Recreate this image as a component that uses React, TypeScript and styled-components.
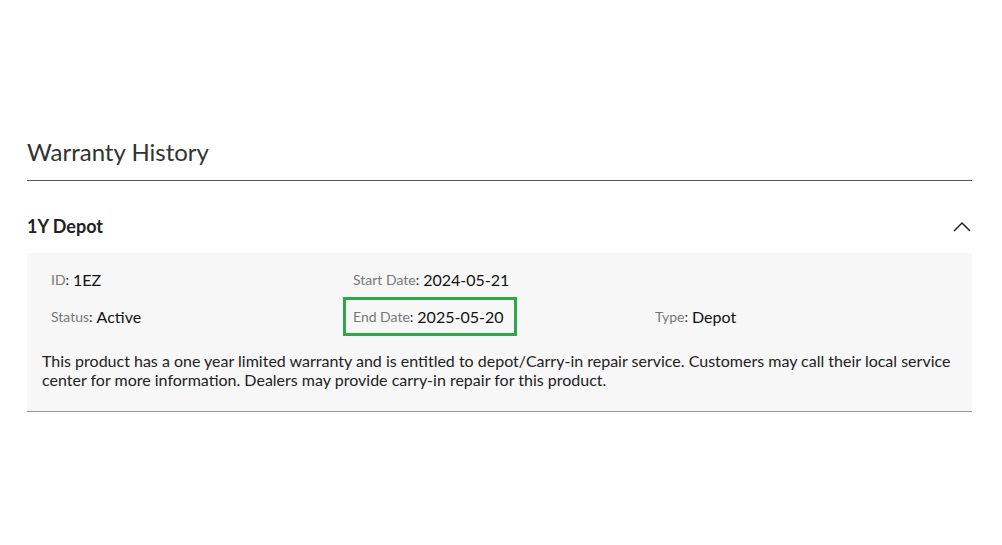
import React from "react";
import styled, {createGlobalStyle} from "styled-components";

const GlobalStyle = createGlobalStyle`
  body {
    margin: 0;
    background: #ffffff;
    font-family: Lato, "Open Sans", sans-serif;
    color: #222;
  }
`

type FieldPropsType = {
  label: string
  value: string
  highlighted?: boolean
};

const Field = (props: FieldPropsType) => {
  return (
    <FieldCell $highlighted={props.highlighted}>
      <FieldLabel>{props.label}</FieldLabel>
      <FieldColon>:</FieldColon>
      <FieldValue>{props.value}</FieldValue>
    </FieldCell>
  );
};

const ChevronUp = () => (
  <svg width="18" height="11" viewBox="0 0 18 11" fill="none">
    <polyline points="1,10 9,2 17,10" stroke="#222" strokeWidth="1.5" />
  </svg>
);

export default function App() {
  return (
    <>
      <GlobalStyle/>
      <Page>
        <Title>Warranty History</Title>
        <AccordionHeader>
          <AccordionTitle>1Y Depot</AccordionTitle>
          <ChevronUp/>
        </AccordionHeader>
        <AccordionBody>
          <FieldsGrid>
            <Field label="ID" value="1EZ"/>
            <Field label="Start Date" value="2024-05-21"/>
            <span/>
            <Field label="Status" value="Active"/>
            <Field label="End Date" value="2025-05-20" highlighted/>
            <Field label="Type" value="Depot"/>
          </FieldsGrid>
          <Description>
            This product has a one year limited warranty and is entitled to depot/Carry-in repair service. Customers may call their local service center for more information. Dealers may provide carry-in repair for this product.
          </Description>
        </AccordionBody>
      </Page>
    </>
  );
}

const Page = styled.div`
  padding: 136px 30px 0 27px;
`
const Title = styled.h2`
  margin: 0;
  padding-bottom: 13px;
  font-size: 24px;
  font-weight: 400;
  line-height: 31px;
  color: #333;
  border-bottom: 1px solid #555;
`
const AccordionHeader = styled.div`
  margin-top: 18px;
  height: 54px;
  display: flex;
  align-items: center;
  justify-content: space-between;
  padding-right: 1px;
`
const AccordionTitle = styled.span`
  font-size: 18px;
  font-weight: 700;
  color: #222;
`
const AccordionBody = styled.div`
  background: #f7f7f7;
  padding: 8px 15px 22px 15px;
  border-bottom: 1px solid #999;
`
const FieldsGrid = styled.div`
  display: grid;
  grid-template-columns: 302px 302px 1fr;
  grid-auto-rows: 37px;
  padding-left: 9px;
`
const FieldCell = styled.div<{ $highlighted?: boolean }>`
  display: flex;
  align-items: center;
  align-self: center;
  justify-self: start;
  ${(p) => p.$highlighted && `
    height: 33px;
    margin-left: -10px;
    padding: 0 11px 0 7px;
    border: 3px solid #2aa84a;
  `}
`
const FieldLabel = styled.span`
  font-size: 14px;
  color: #777;
`
const FieldColon = styled.span`
  font-size: 14px;
  color: #222;
  margin-right: 4px;
`
const FieldValue = styled.span`
  font-size: 16px;
  color: #111;
`
const Description = styled.p`
  margin: 16px 0 0 0;
  font-size: 16px;
  line-height: 19px;
  color: #222;
`
